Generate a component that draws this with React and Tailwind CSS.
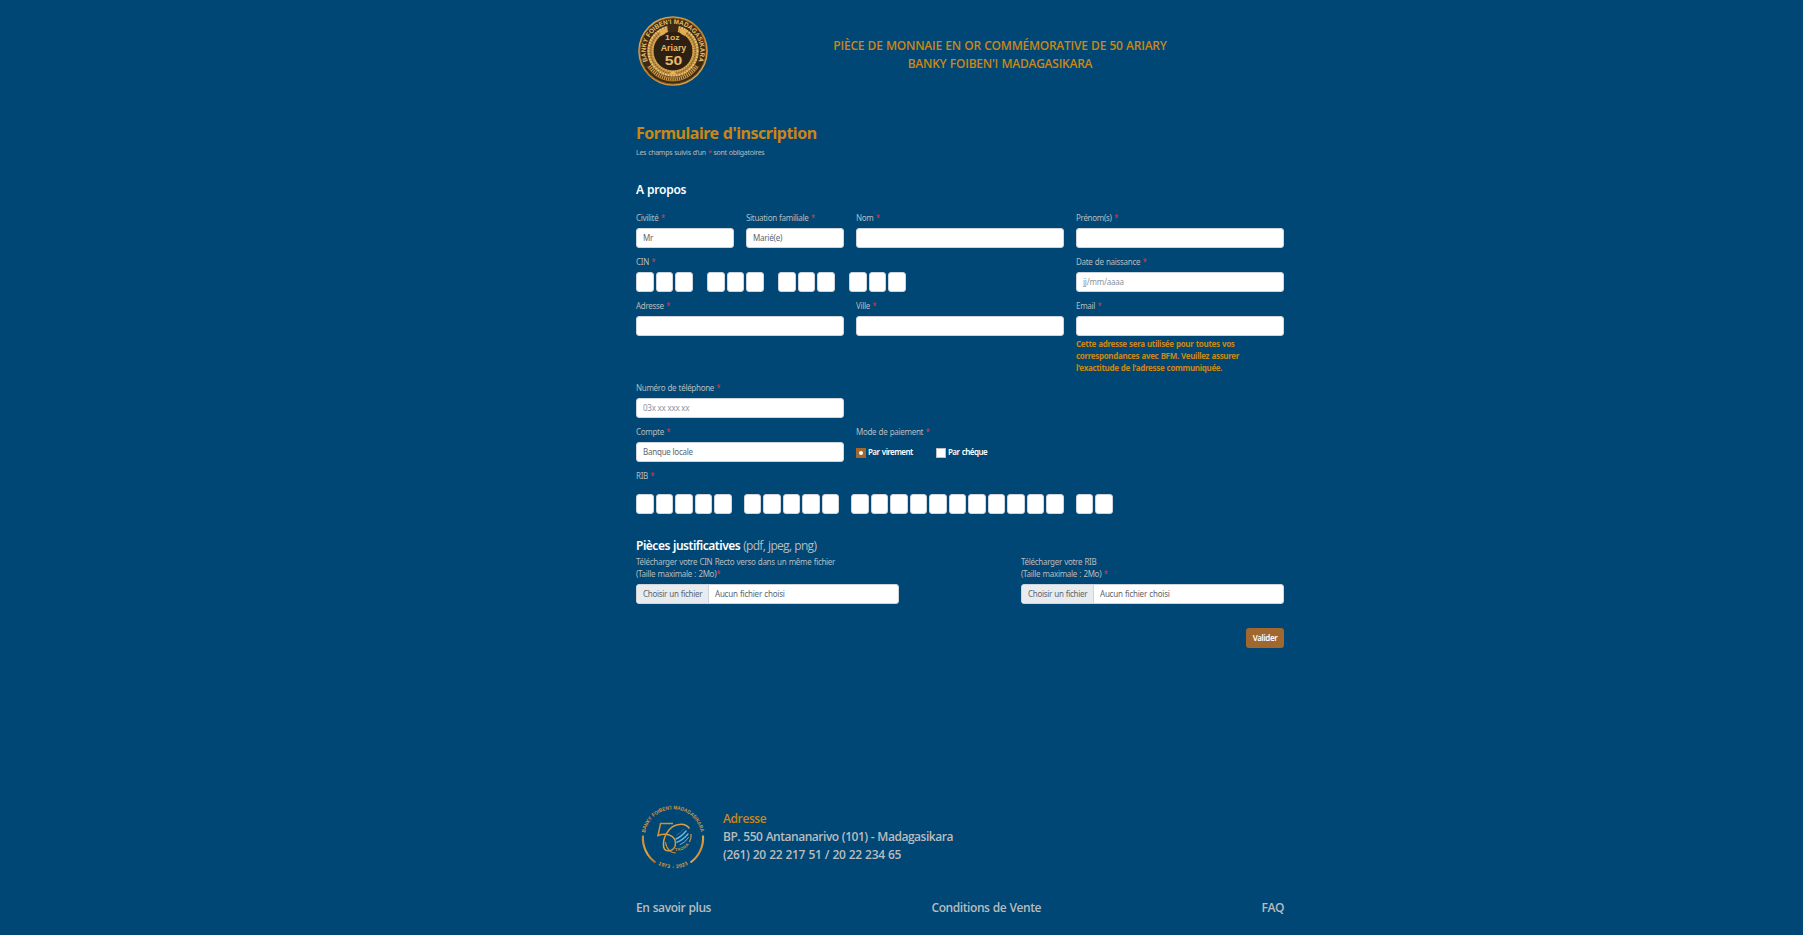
import React from 'react'

const Star = () => <span className="text-[#dc3545]">*</span>

const inputBase =
  'block h-5 w-full rounded-[3px] border border-[#ced4da] bg-white px-1.5 pb-px text-[8px] leading-3 tracking-[-0.23px] text-[#5b6570] outline-none placeholder:text-[#8b939b] placeholder:opacity-100'

function Field({ label, className = '', children }) {
  return (
    <div className={className}>
      <label className="mb-1 block h-3 whitespace-nowrap">
        {label} <Star />
      </label>
      {children}
    </div>
  )
}

const Input = (props) => <input type="text" className={inputBase} {...props} />

function Boxes({ groups, boxClass, gapClass }) {
  return (
    <div className={`flex ${gapClass}`}>
      {groups.map((count, g) => (
        <div key={g} className="flex gap-0.5">
          {Array.from({ length: count }, (_, i) => (
            <input
              key={i}
              type="text"
              maxLength={1}
              className={`block h-5 rounded-[3px] border border-[#ced4da] bg-white outline-none ${boxClass}`}
            />
          ))}
        </div>
      ))}
    </div>
  )
}

function FilePicker() {
  return (
    <div className="flex h-5 overflow-hidden rounded-[3px] border border-[#ced4da] bg-white leading-[18px] text-[#5b6570]">
      <span className="w-[72px] shrink-0 border-r border-[#ced4da] bg-[#e9ecef] pl-1.5">Choisir un fichier</span>
      <span className="pl-1.5 tracking-[-0.22px]">Aucun fichier choisi</span>
    </div>
  )
}

function Coin() {
  return (
    <svg viewBox="0 0 70 70" className="h-[70px] w-[70px] shrink-0 tracking-normal">
      <defs>
        <linearGradient id="gold" x1="0" y1="0" x2="1" y2="1">
          <stop offset="0" stopColor="#e8b456" />
          <stop offset="0.5" stopColor="#c08834" />
          <stop offset="1" stopColor="#e6b258" />
        </linearGradient>
        <path id="coinTop" d="M10.6 47 A27.2 27.2 0 1 1 59.4 47" />
      </defs>
      <circle cx="35" cy="35" r="34.8" fill="url(#gold)" />
      <circle cx="35" cy="35" r="33.2" fill="#3d2a14" />
      <circle cx="35" cy="35" r="33" fill="none" stroke="#a06d28" strokeWidth="0.7" />
      <circle cx="35" cy="35" r="22.6" fill="none" stroke="#b9893c" strokeWidth="6.4" />
      <circle cx="35" cy="35" r="24.5" fill="none" stroke="#edc67a" strokeWidth="1.8" strokeDasharray="1.6 1.2" />
      <circle cx="35" cy="35" r="22.4" fill="none" stroke="#7d5620" strokeWidth="1.1" strokeDasharray="1 1.6" />
      <circle cx="35" cy="35" r="20.5" fill="none" stroke="#e2b35c" strokeWidth="1.4" strokeDasharray="1.4 1" />
      <path d="M29 8.5 H41 L39.5 17.5 H30.5 Z" fill="#3d2a14" />
      <path d="M21 14 L30 12.5 L27 17 L30 19.5 L23 20 Z M49 14 L40 12.5 L43 17 L40 19.5 L47 20 Z" fill="#e0ad52" />
      <circle cx="35" cy="35" r="19" fill="#2b2013" />
      <text fill="#ecc06c" fontSize="6.6" fontWeight="700" fontFamily="'Liberation Sans', sans-serif">
        <textPath href="#coinTop" textLength="106" lengthAdjust="spacingAndGlyphs" startOffset="2">
          BANKY FOIBEN'I MADAGASIKARA
        </textPath>
      </text>
      <path d="M11.5 50 A27.8 27.8 0 0 0 58.5 50" fill="none" stroke="#cf9d48" strokeWidth="4" strokeDasharray="1.3 0.8" />
      <path d="M9.3 50.5 A30 30 0 0 0 60.7 50.5" fill="none" stroke="#b98233" strokeWidth="0.8" />
      <path d="M31 58.5 L35 54.5 L39 58.5 Z" fill="#e6b55c" />
      <g fill="#e6b968" fontFamily="'Liberation Sans', sans-serif" fontWeight="700" textAnchor="middle">
        <text x="34.3" y="24" fontSize="7.6" textLength="14.5" lengthAdjust="spacingAndGlyphs">1oz</text>
        <text x="35.5" y="35.2" fontSize="8.2" textLength="25.5" lengthAdjust="spacingAndGlyphs">Ariary</text>
        <text x="35.5" y="49" fontSize="13.6" textLength="17.5" lengthAdjust="spacingAndGlyphs">50</text>
      </g>
    </svg>
  )
}

function AnniversaryLogo() {
  return (
    <svg viewBox="0 0 70 70" className="h-[70px] w-[70px] shrink-0 tracking-normal">
      <defs>
        <linearGradient id="bronze" x1="0" y1="0" x2="1" y2="1">
          <stop offset="0" stopColor="#c98a35" />
          <stop offset="0.5" stopColor="#e0a544" />
          <stop offset="1" stopColor="#b06f2c" />
        </linearGradient>
        <path id="logoTop" d="M7.2 29.8 A28.2 28.2 0 0 1 62.8 29.8" />
        <path id="logoBottom" d="M18 60.3 A30.8 30.8 0 0 0 52 60.3" />
        <path id="logoInner" d="M37 48 Q47 48.5 52.5 39" />
      </defs>
      <g fill="none" stroke="url(#bronze)">
        <path d="M5 32.5 A30 30 0 0 0 17.5 59.5" strokeWidth="2.1" />
        <path d="M65 32.5 A30 30 0 0 1 52.5 59.5" strokeWidth="2.1" />
        <path d="M35 20.5 H22.5 L20 32.5 C29 29 37.5 33 37.5 40 C37.5 48.5 27 50.5 25.6 44 C24.3 34 31 23.5 39.5 21.7 C45 20.5 49 22 51.5 25.5" strokeWidth="1.5" />
        <path d="M27.5 39 C28.5 46.5 33 50.5 38 49.8" strokeWidth="1.1" />
        <path d="M53 31 C53.5 34 52.8 37 51.5 39" strokeWidth="1.2" />
      </g>
      <g fill="none" stroke="#6db6dc" strokeLinecap="round">
        <path d="M38 36 Q43 34 48 28" strokeWidth="1.5" />
        <path d="M39 39.2 Q45 37 50 31" strokeWidth="1.4" />
        <path d="M42 41.7 Q47 40 50.5 34.5" strokeWidth="1" />
        <path d="M39 32 Q42 30.5 46 26" strokeWidth="1" stroke="#2a6f9e" />
      </g>
      <g fill="#d89a42" fontFamily="'Liberation Sans', sans-serif" fontWeight="700">
        <text fontSize="5.3">
          <textPath href="#logoTop" textLength="78" lengthAdjust="spacingAndGlyphs">
            BANKY FOIBEN'I MADAGASIKARA
          </textPath>
        </text>
        <text fontSize="5.2">
          <textPath href="#logoBottom" startOffset="2.5" textLength="31">1973 - 2023</textPath>
        </text>
        <text fontSize="4.2">
          <textPath href="#logoInner" textLength="16">TAONA</textPath>
        </text>
      </g>
    </svg>
  )
}

export default function App() {
  return (
    <div className="flex h-[935px] w-full justify-center overflow-hidden bg-[#004775] pl-[117px] font-['Noto_Sans',sans-serif] text-[8px] leading-3 tracking-[-0.3px] text-[#b9bcbe] [word-spacing:0.5px]">
      <div className="flex w-[648px] flex-col">
        <header className="flex pt-4">
          <div className="w-20 pl-0.5">
            <Coin />
          </div>
          <h2 className="flex-1 pt-[21px] text-center font-['Open_Sans',sans-serif] text-xs leading-[18px] font-semibold tracking-[-0.24px] text-[#cb8614]">
            PIÈCE DE MONNAIE EN OR COMMÉMORATIVE DE 50 ARIARY
            <br />
            BANKY FOIBEN'I MADAGASIKARA
          </h2>
        </header>

        <main>
          <h1 className="mt-[37px] text-base leading-5 font-bold tracking-[-0.48px] text-[#cb8614]">
            Formulaire d'inscription
          </h1>
          <p className="mt-1 text-[7px] tracking-[-0.29px]">
            Les champs suivis d'un <Star /> sont obligatoires
          </p>
          <h3 className="mt-[22px] text-xs leading-[18px] font-semibold tracking-[-0.28px] text-white">A propos</h3>

          <form className="mt-[13px]">
            <div className="grid grid-cols-6 gap-x-3 gap-y-2">
              <Field label="Civilité">
                <Input defaultValue="Mr" />
              </Field>
              <Field label="Situation familiale">
                <Input defaultValue="Marié(e)" />
              </Field>
              <Field label="Nom" className="col-span-2">
                <Input />
              </Field>
              <Field label="Prénom(s)" className="col-span-2">
                <Input />
              </Field>

              <Field label="CIN" className="col-span-4">
                <Boxes groups={[3, 3, 3, 3]} boxClass="w-[17.6px]" gapClass="gap-[14.2px]" />
              </Field>
              <Field label="Date de naissance" className="col-span-2">
                <Input placeholder="jj/mm/aaaa" />
              </Field>

              <Field label="Adresse" className="col-span-2">
                <Input />
              </Field>
              <Field label="Ville" className="col-span-2">
                <Input />
              </Field>
              <Field label="Email" className="col-span-2">
                <Input />
                <p className="mt-0.5 font-bold tracking-[-0.33px] whitespace-nowrap text-[#cb8614]">
                  Cette adresse sera utilisée pour toutes vos
                  <br />
                  correspondances avec BFM. Veuillez assurer
                  <br />
                  l'exactitude de l'adresse communiquée.
                </p>
              </Field>

              <Field label="Numéro de téléphone" className="col-span-2">
                <Input placeholder="03x xx xxx xx" />
              </Field>
              <div className="col-span-4" />

              <Field label="Compte" className="col-span-2">
                <Input defaultValue="Banque locale" />
              </Field>
              <Field label="Mode de paiement" className="col-span-4">
                <div className="flex h-5 items-center font-semibold tracking-[-0.57px] text-white [word-spacing:1px]">
                  <label className="flex w-20 items-center gap-0.5">
                    <span className="mt-px flex size-2.5 items-center justify-center bg-[#a0682f]">
                      <span className="size-1 rounded-full bg-white" />
                    </span>
                    Par virement
                  </label>
                  <label className="flex items-center gap-0.5">
                    <span className="mt-px size-2.5 border border-[#bfbfbf] bg-white" />
                    Par chéque
                  </label>
                </div>
              </Field>
            </div>

            <div className="mt-2">
              <label className="mb-3 block h-3">
                RIB <Star />
              </label>
              <Boxes groups={[5, 5, 11, 2]} boxClass="w-[17.5px]" gapClass="gap-3" />
            </div>

            <h3 className="mt-[23px] flex gap-[3px] text-xs leading-[18px] font-semibold tracking-[-0.48px] text-white">
              Pièces justificatives
              <span className="font-['Open_Sans',sans-serif] font-normal tracking-[-0.69px] text-[#b9bcbe]">
                (pdf, jpeg, png)
              </span>
            </h3>
            <div className="mt-px flex justify-between">
              <div className="w-[263px]">
                <p className="mb-1">
                  Télécharger votre CIN Recto verso dans un même fichier
                  <br />
                  (Taille maximale : 2Mo)
                  <Star />
                </p>
                <FilePicker />
              </div>
              <div className="w-[263px]">
                <p className="mb-1">
                  Télécharger votre RIB
                  <br />
                  (Taille maximale : 2Mo) <Star />
                </p>
                <FilePicker />
              </div>
            </div>
            <div className="mt-6 flex justify-end">
              <button
                type="button"
                className="h-5 w-[38px] rounded-[3px] bg-[#a0682f] text-[8px] leading-3 font-semibold tracking-[-0.39px] text-white"
              >
                Valider
              </button>
            </div>
          </form>
        </main>

        <footer className="mt-[155px] font-['Open_Sans',sans-serif] text-xs leading-[18px] font-semibold">
          <div className="flex gap-[15px] pl-0.5">
            <AnniversaryLogo />
            <address className="pt-[7px] not-italic">
              <div className="tracking-[-0.4px] text-[#cb8614]">Adresse</div>
              <div className="tracking-[-0.47px]">BP. 550 Antananarivo (101) - Madagasikara</div>
              <div className="tracking-[-0.33px]">(261) 20 22 217 51 / 20 22 234 65</div>
            </address>
          </div>
          <nav className="mt-[26px] flex justify-between tracking-[-0.42px]">
            <a>En savoir plus</a>
            <a>Conditions de Vente</a>
            <a>FAQ</a>
          </nav>
        </footer>
      </div>
    </div>
  )
}
